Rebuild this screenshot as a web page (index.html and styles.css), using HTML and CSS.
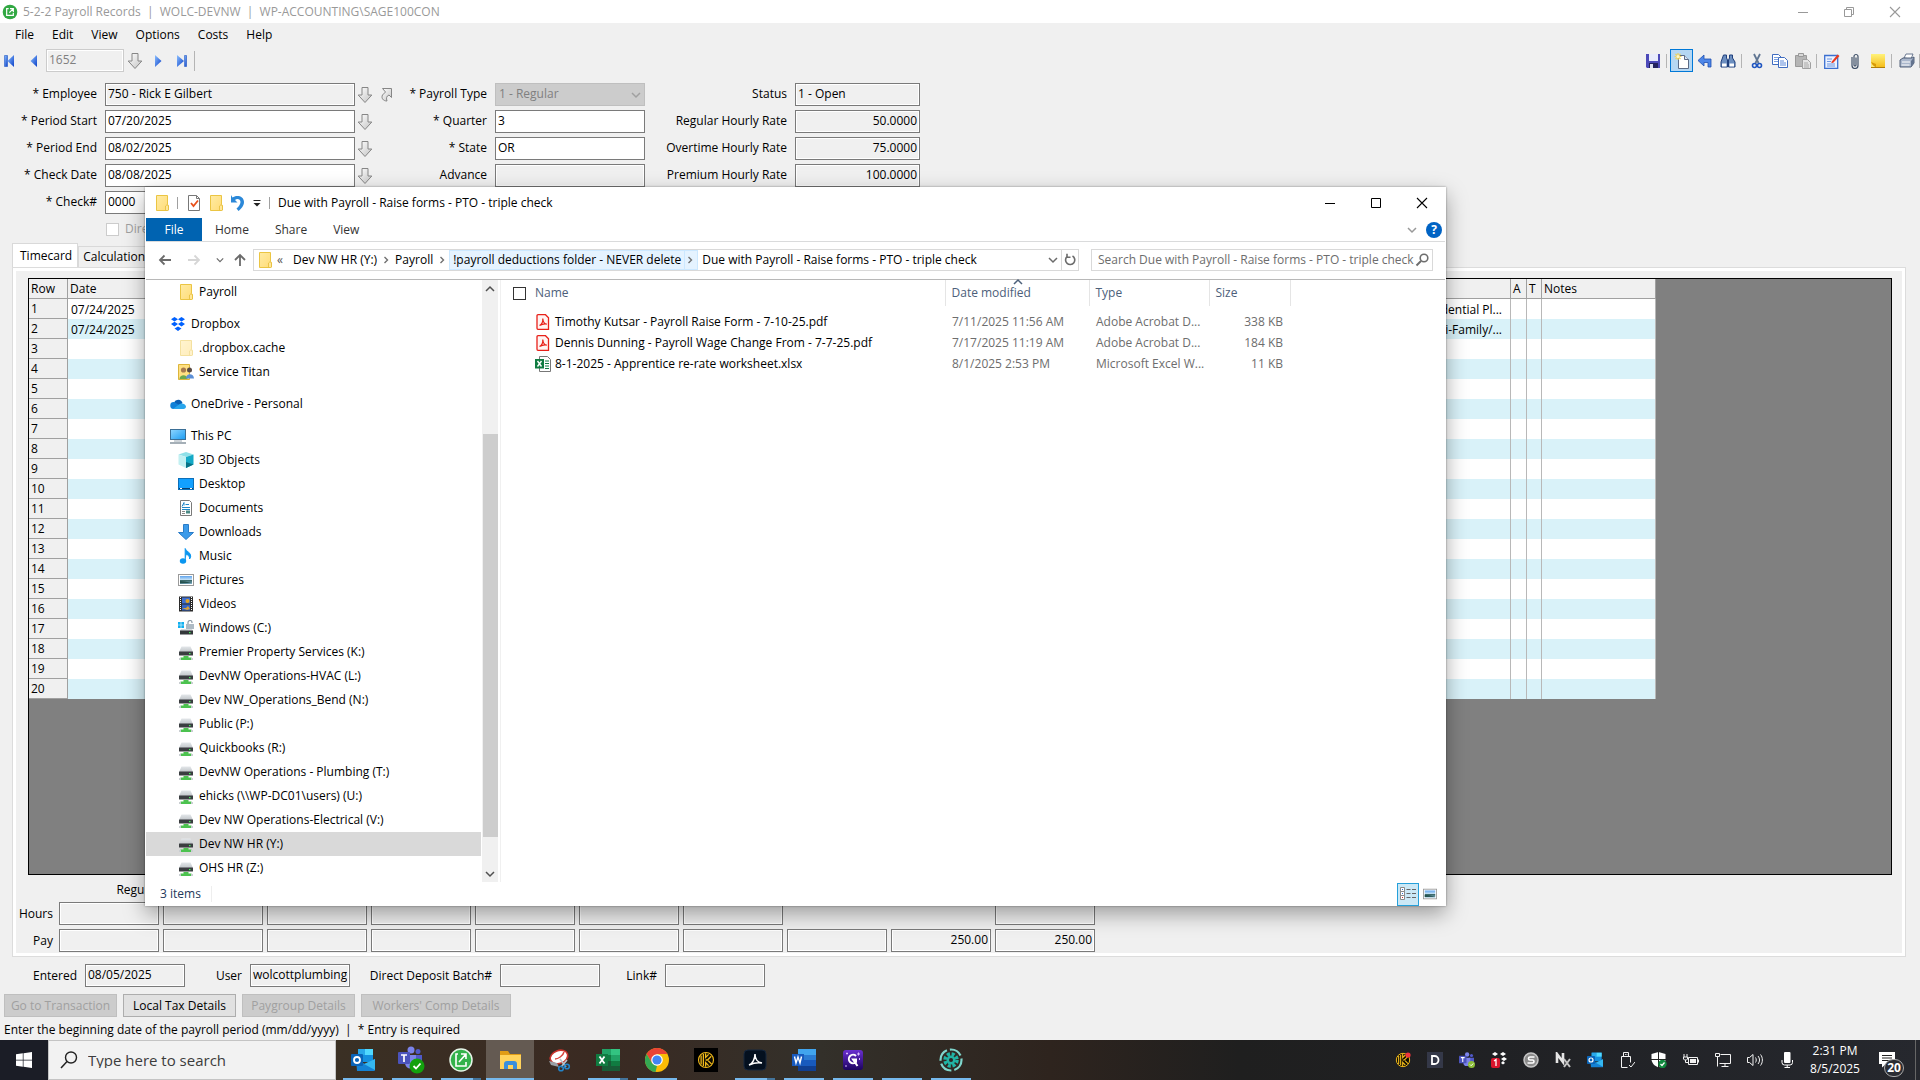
FILE: index.html
```html
<!DOCTYPE html>
<html lang="en">
<head>
  <meta charset="UTF-8" />
  <meta name="viewport" content="width=device-width, initial-scale=1.0" />
  <title>5-2-2 Payroll Records</title>
  <link rel="stylesheet" href="styles.css">
</head>
<body>
  <!-- shared icons -->
  <svg class="sprite" aria-hidden="true">
    <defs>
      <linearGradient id="g-blue" x1="0" y1="0" x2="1" y2="1"><stop offset="0" stop-color="#8cc0ff"/><stop offset="1" stop-color="#0a3fc8"/></linearGradient>
      <linearGradient id="g-grey" x1="0" y1="0" x2="1" y2="1"><stop offset="0" stop-color="#ffffff"/><stop offset="1" stop-color="#c4c4c4"/></linearGradient>
      <linearGradient id="g-folder" x1="0" y1="0" x2="1" y2="1"><stop offset="0" stop-color="#ffeba3"/><stop offset="1" stop-color="#ffdc78"/></linearGradient>
      <linearGradient id="g-screen" x1="0" y1="0" x2="1" y2="1"><stop offset="0" stop-color="#8fd6ff"/><stop offset="1" stop-color="#1b9cf2"/></linearGradient>
      <linearGradient id="g-drive" x1="0" y1="0" x2="0" y2="1"><stop offset="0" stop-color="#e4e7ea"/><stop offset="1" stop-color="#bfc4c8"/></linearGradient>
      <linearGradient id="g-photo" x1="0" y1="0" x2="0" y2="1"><stop offset="0" stop-color="#5ea3ee"/><stop offset=".55" stop-color="#d7ecf7"/><stop offset=".56" stop-color="#3c6a6b"/><stop offset="1" stop-color="#86b4cf"/></linearGradient>
      <linearGradient id="g-note" x1="0" y1="0" x2="0" y2="1"><stop offset="0" stop-color="#fff27a"/><stop offset="1" stop-color="#f5b914"/></linearGradient>
      <linearGradient id="g-purple" x1="0" y1="0" x2="0" y2="1"><stop offset="0" stop-color="#6a2fd0"/><stop offset="1" stop-color="#1c0360"/></linearGradient>
    </defs>
    <symbol id="down" viewBox="0 0 16 18"><path d="M5 1.500h6v7.500h3.800L8 16.500 1.200 9H5z" fill="url(#g-grey)" stroke="#868686"/></symbol>
    <symbol id="jump" viewBox="0 0 14 16"><path d="M3.500 1.500h9v9l-2.500-2.500c-2.500 1-3 3-2 6-4 0-6-3-4.500-6L6.500 5z" fill="url(#g-grey)" stroke="#868686"/></symbol>
    <symbol id="folder" viewBox="0 0 16 16"><path d="M2.500.5h11v9l1 .8v4.700l-1 .5h-11z" fill="url(#g-folder)" stroke="#ebc543"/><path d="M11.500 15.500v-4.500l1.500-1.300 1.500 1.300v4l-1 .5z" fill="#ffe79a" stroke="#e6bd39" stroke-width=".8"/></symbol>
    <symbol id="drive" viewBox="0 0 16 16"><path d="M3.500 2.500h9L15 8H1z" fill="url(#g-drive)"/><rect x="1" y="7.500" width="14" height="4" rx=".5" fill="#3a3d40"/><rect x="11" y="9" width="1.500" height="1.200" fill="#43f05a"/><path d="M5.500 12h5v1.500h3V16h-11v-2.500h3z" fill="#4cc24f"/><path d="M1 14h2v2H1zm12 0h2v2h-2z" fill="#c9ced2"/></symbol>
    <symbol id="photo" viewBox="0 0 16 16"><rect x=".5" y="2.500" width="15" height="11" fill="#fff" stroke="#9a9a9a"/><rect x="2" y="4" width="12" height="8" fill="url(#g-photo)"/><path d="M2 9l5 .5 7 1.500-12 .5z" fill="#24524e"/></symbol>
    <symbol id="chevron" viewBox="0 0 10 10"><path d="M3.500 2l3 3-3 3" fill="none" stroke="#707070" stroke-width="1.400"/></symbol>
    <symbol id="caret" viewBox="0 0 10 10"><path d="M1 3l4 4 4-4" fill="none" stroke="currentColor" stroke-width="1.500"/></symbol>
    <symbol id="glass" viewBox="0 0 14 14"><circle cx="9" cy="5" r="3.800" fill="none" stroke="currentColor" stroke-width="1.600"/><path d="M6 8l-4.500 4.500" stroke="currentColor" stroke-width="2"/></symbol>
    <symbol id="pdf" viewBox="0 0 16 16"><path d="M3 .7h7.500l3 3v11.600H3a1 1 0 0 1-1-1V1.700a1 1 0 0 1 1-1z" fill="#fff4f3" stroke="#e8211a" stroke-width="1.300"/><path d="M4.500 11.500c2-1 3.500-4 3.300-7 .3 3.500 2 5.500 4 5.600-2.500-.6-5 .2-7.300 1.400z" fill="none" stroke="#e8211a" stroke-width="1.200"/></symbol>
    <symbol id="close" viewBox="0 0 12 12"><path d="M1 1l10 10M11 1L1 11" stroke="currentColor" stroke-width="1.100"/></symbol>
    <symbol id="minimize" viewBox="0 0 12 12"><path d="M1 6.500h10" stroke="currentColor"/></symbol>
    <symbol id="outlook" viewBox="0 0 24 24"><path d="M7 1h15v13H7z" fill="#1490df"/><path d="M14 1h8v6h-8z" fill="#50d9ff"/><path d="M7 1h7v6H7z" fill="#28a8ea"/><path d="M5 11l9 5 10-5v11a1 1 0 0 1-1 1H6z" fill="#1482d4"/><path d="M24 11v11L13 16z" fill="#35b8f1"/><rect y="6" width="12" height="12" rx="1" fill="#0a64b8"/><circle cx="6" cy="12" r="3" fill="none" stroke="#fff" stroke-width="1.800"/></symbol>
    <symbol id="teams" viewBox="0 0 24 24"><circle cx="13" cy="4" r="3.500" fill="#7b83eb"/><circle cx="20" cy="5.500" r="2.500" fill="#5059c9"/><path d="M16 9h8v7a4 4 0 0 1-6 3z" fill="#5059c9"/><path d="M7 9h11v8a5.500 5.500 0 0 1-11 0z" fill="#7b83eb"/><rect y="6" width="12" height="12" rx="1" fill="#4b53bc"/><path d="M3 9h6M6 9v7" stroke="#fff" stroke-width="1.700"/></symbol>
    <symbol id="sage" viewBox="0 0 24 24"><circle cx="12" cy="12" r="11" fill="#32a843"/><path d="M10 7H7v10h10v-4M12 7h5v5M17 7l-6 6" fill="none" stroke="#fff" stroke-width="1.800"/></symbol>
    <symbol id="keeper" viewBox="0 0 24 24"><circle cx="12" cy="12" r="10" fill="#0c0a02" stroke="#f0b91a" stroke-width="1.500"/><path d="M5.500 6v12M8.500 4v16M11.500 3v5.500l4-4M11.500 21v-5.500l4 4M11.500 12h2.500l5-5M15 13l4.500 4.500" fill="none" stroke="#f0b91a" stroke-width="1.700"/></symbol>
  </svg>

  <main class="app">
    <header class="titlebar">
      <svg class="app-icon"><use href="#sage"/></svg>
      <h1 class="app-title">5-2-2 Payroll Records&nbsp; |&nbsp; WOLC-DEVNW&nbsp; |&nbsp; WP-ACCOUNTING\SAGE100CON</h1>
      <div class="win-controls">
        <button aria-label="Minimize"><svg class="i12"><use href="#minimize"/></svg></button>
        <button aria-label="Restore"><svg class="i12" viewBox="0 0 12 12"><path d="M1.500 3.500h7v7h-7zM3.500 3.500v-2h7v7h-2" fill="none" stroke="currentColor"/></svg></button>
        <button aria-label="Close"><svg class="i12"><use href="#close"/></svg></button>
      </div>
    </header>

    <nav class="menubar">
      <button>File</button>
      <button>Edit</button>
      <button>View</button>
      <button>Options</button>
      <button>Costs</button>
      <button>Help</button>
    </nav>

    <div class="toolbar">
      <div class="record-nav">
        <button aria-label="First record"><svg class="i14" viewBox="0 0 14 14"><path d="M1.500 1.500h3v11h-3z" fill="url(#g-blue)" stroke="#2457c4" stroke-width=".6"/><path d="M11 1v12L4.500 7z" fill="url(#g-blue)"/></svg></button>
        <button aria-label="Previous record"><svg class="i14" viewBox="0 0 14 14"><path d="M10 1v12L3.500 7z" fill="url(#g-blue)"/></svg></button>
        <input class="record-no" type="text" value="1652" aria-label="Record number" disabled>
        <button class="pick" aria-label="Pick record"><svg class="arrow"><use href="#down"/></svg></button>
        <button aria-label="Next record"><svg class="i14" viewBox="0 0 14 14"><path d="M4 1v12l6.500-6z" fill="url(#g-blue)"/></svg></button>
        <button aria-label="Last record"><svg class="i14" viewBox="0 0 14 14"><path d="M9.500 1.500h2v11h-2z" fill="url(#g-blue)" stroke="#2457c4" stroke-width=".6"/><path d="M2 1v12l7-6z" fill="url(#g-blue)"/></svg></button>
        <span class="sep"></span>
      </div>
      <div class="tools">
        <button aria-label="Save"><svg class="i16" viewBox="0 0 16 16"><path d="M1 1h14v14H2l-1-1z" fill="#4c49b8"/><path d="M4 1h9v7H4z" fill="#e9ecfb"/><path d="M4 10h9v5H4z" fill="#23225e"/><path d="M5 11h3v4H5z" fill="#dfe1f2"/></svg></button>
        <span class="sep"></span>
        <button class="on" aria-label="New"><svg class="i16" viewBox="0 0 16 16"><path d="M4.500 2.500h6l4 4v9h-10z" fill="#fff" stroke="#5b6b86"/><path d="M10.500 2.500v4h4" fill="#dbe5f5" stroke="#5b6b86"/><path d="M4 0v7M.5 3.500h7M1.500 1l5 5M6.500 1l-5 5" stroke="#efd25b" stroke-width="1.200"/><circle cx="4" cy="3.500" r="1.500" fill="#fff8c8"/></svg></button>
        <button aria-label="Undo"><svg class="i16" viewBox="0 0 16 16"><path d="M7 2v4h7v8h-3V9.500H7v3.500L1 7.500z" fill="#4d86e8" stroke="#1f4fae" stroke-width=".8"/></svg></button>
        <button aria-label="Find"><svg class="i16" viewBox="0 0 16 16"><path d="M3.500 2h3v3l1 2v7h-6.500V9zM9.500 2h3v3L15 9v5H8.500V7l1-2z" fill="#6d8fc0" stroke="#1f3f7c"/><path d="M2 10.500h4.500v3H2zM9.500 10.500H14v3H9.500z" fill="#fff"/><path d="M7 7h2v3H7z" fill="#1f3f7c"/></svg></button>
        <span class="sep"></span>
        <button aria-label="Cut"><svg class="i16" viewBox="0 0 16 16"><path d="M5 1l4.500 9M11 1L6.500 10" stroke="#5f7592" stroke-width="1.800"/><circle cx="5.500" cy="12.500" r="2" fill="none" stroke="#1f55c0" stroke-width="1.600"/><circle cx="10.500" cy="12.500" r="2" fill="none" stroke="#1f55c0" stroke-width="1.600"/></svg></button>
        <button aria-label="Copy"><svg class="i16" viewBox="0 0 16 16"><path d="M.5 1.500h6l2.500 2.500v7.500H.5z" fill="#fff" stroke="#3f6cc0"/><path d="M2 4.500h4M2 6.500h5M2 8.500h5" stroke="#7ba0e0"/><path d="M6.500 4.500h6l3 3v7h-9z" fill="#fff" stroke="#3f6cc0"/><path d="M8 8h4M8 10h6M8 12h6" stroke="#5c88d8"/></svg></button>
        <button aria-label="Paste" disabled><svg class="i16" viewBox="0 0 16 16"><path d="M.5 2.500h11v11H.5z" fill="#b5b5b5" stroke="#9a9a9a"/><path d="M3.500.5h5v3h-5z" fill="#d8d8d8" stroke="#999"/><path d="M7.500 6.500h5l3 3v6h-8z" fill="#e4e4e4" stroke="#a0a0a0"/><path d="M9 10h4M9 12h5M9 14h5" stroke="#aaa"/></svg></button>
        <span class="sep"></span>
        <button aria-label="Edit"><svg class="i16" viewBox="0 0 16 16"><path d="M.700 2.500h13v13H.700z" fill="#eaf1ff" stroke="#3b6fd0" stroke-width="1.300"/><path d="M3 6h5M3 8.500h4M3 11h8M3 13h8" stroke="#6f96df"/><path d="M7 9.500L13.500 1.500l2 1.500L9 10z" fill="#e8391f"/></svg></button>
        <button aria-label="Attachments"><svg class="i16" viewBox="0 0 16 16"><path d="M5 4v8.500a3 3 0 0 0 6 0V3.500a2 2 0 0 0-4 0V12a1 1 0 0 0 2 0V4.500" fill="none" stroke="#3f5068" stroke-width="1.200"/></svg></button>
        <button aria-label="Notes"><svg class="i16" viewBox="0 0 16 16"><path d="M1 1h14v14H1z" fill="url(#g-note)"/><path d="M1 9l5 2v4H1z" fill="#d89a05"/><path d="M1 15V9c1 3 3 4.500 6 6z" fill="#fde878"/><path d="M1 14.500h14" stroke="#b07d08"/></svg></button>
        <span class="sep"></span>
        <button aria-label="Print"><svg class="i16" viewBox="0 0 16 16"><path d="M5 5l2-4h7l-2 5z" fill="#fff" stroke="#5c6c86" stroke-width=".9"/><path d="M1 7l3-2h9l2-1v6l-3 4H1z" fill="#a9b6cb" stroke="#44546e" stroke-width=".9"/><path d="M2.500 12h8M3 9h8" stroke="#fff"/><path d="M12 8l3-3.500V10l-3 4z" fill="#63738e"/></svg></button>
        <span class="sep"></span>
      </div>
    </div>

    <form class="record-form">
      <div class="form-col wide">
        <label for="employee">* Employee</label>
        <input id="employee" type="text" value="750 - Rick E Gilbert" readonly>
        <div class="lookups"><svg class="arrow"><use href="#down"/></svg><svg class="jump"><use href="#jump"/></svg></div>
        <label for="period-start">* Period Start</label>
        <input id="period-start" type="text" value="07/20/2025">
        <div class="lookups"><svg class="arrow"><use href="#down"/></svg></div>
        <label for="period-end">* Period End</label>
        <input id="period-end" type="text" value="08/02/2025">
        <div class="lookups"><svg class="arrow"><use href="#down"/></svg></div>
        <label for="check-date">* Check Date</label>
        <input id="check-date" type="text" value="08/08/2025">
        <div class="lookups"><svg class="arrow"><use href="#down"/></svg></div>
        <label for="check-no">* Check#</label>
        <input id="check-no" type="text" value="0000">
        <span></span>
        <span></span>
        <div class="check-row"><input id="direct" type="checkbox" disabled><label for="direct">Direct Deposit</label></div>
      </div>
      <div class="form-col mid">
        <label for="pay-type">* Payroll Type</label>
        <div class="select-box">
          <select id="pay-type" disabled><option>1 - Regular</option></select>
          <svg class="i10"><use href="#caret"/></svg>
        </div>
        <label for="quarter">* Quarter</label>
        <input id="quarter" type="text" value="3">
        <label for="state">* State</label>
        <input id="state" type="text" value="OR">
        <label for="advance">Advance</label>
        <input id="advance" type="text" readonly>
      </div>
      <div class="form-col rates">
        <label for="status">Status</label>
        <input id="status" type="text" value="1 - Open" readonly>
        <label for="rate-reg">Regular Hourly Rate</label>
        <input id="rate-reg" class="num" type="text" value="50.0000" readonly>
        <label for="rate-ot">Overtime Hourly Rate</label>
        <input id="rate-ot" class="num" type="text" value="75.0000" readonly>
        <label for="rate-prem">Premium Hourly Rate</label>
        <input id="rate-prem" class="num" type="text" value="100.0000" readonly>
      </div>
    </form>

    <div class="tabs">
      <button class="tab active">Timecard</button>
      <button class="tab">Calculations</button>
    </div>

    <section class="panel">
      <div class="grid-area">
        <table class="timecard">
          <colgroup><col class="c-row"><col class="c-date"><col class="c-mid"><col class="c-cost"><col class="c-a"><col class="c-t"><col class="c-notes"></colgroup>
          <thead>
            <tr><th>Row</th><th>Date</th><th></th><th></th><th>A</th><th>T</th><th>Notes</th></tr>
          </thead>
          <tbody>
            <tr><th>1</th><td>07/24/2025</td><td></td><td class="cost">Residential Pl...</td><td></td><td></td><td></td></tr>
            <tr><th>2</th><td>07/24/2025</td><td></td><td class="cost">Multi-Family/...</td><td></td><td></td><td></td></tr>
            <tr><th>3</th><td></td><td></td><td></td><td></td><td></td><td></td></tr>
            <tr><th>4</th><td></td><td></td><td></td><td></td><td></td><td></td></tr>
            <tr><th>5</th><td></td><td></td><td></td><td></td><td></td><td></td></tr>
            <tr><th>6</th><td></td><td></td><td></td><td></td><td></td><td></td></tr>
            <tr><th>7</th><td></td><td></td><td></td><td></td><td></td><td></td></tr>
            <tr><th>8</th><td></td><td></td><td></td><td></td><td></td><td></td></tr>
            <tr><th>9</th><td></td><td></td><td></td><td></td><td></td><td></td></tr>
            <tr><th>10</th><td></td><td></td><td></td><td></td><td></td><td></td></tr>
            <tr><th>11</th><td></td><td></td><td></td><td></td><td></td><td></td></tr>
            <tr><th>12</th><td></td><td></td><td></td><td></td><td></td><td></td></tr>
            <tr><th>13</th><td></td><td></td><td></td><td></td><td></td><td></td></tr>
            <tr><th>14</th><td></td><td></td><td></td><td></td><td></td><td></td></tr>
            <tr><th>15</th><td></td><td></td><td></td><td></td><td></td><td></td></tr>
            <tr><th>16</th><td></td><td></td><td></td><td></td><td></td><td></td></tr>
            <tr><th>17</th><td></td><td></td><td></td><td></td><td></td><td></td></tr>
            <tr><th>18</th><td></td><td></td><td></td><td></td><td></td><td></td></tr>
            <tr><th>19</th><td></td><td></td><td></td><td></td><td></td><td></td></tr>
            <tr><th>20</th><td></td><td></td><td></td><td></td><td></td><td></td></tr>
          </tbody>
        </table>
      </div>

      <div class="totals">
        <span></span><span>Regular</span><span></span><span></span><span></span><span></span><span></span><span></span><span></span><span></span><span></span>
        <label for="hours-1">Hours</label>
        <input id="hours-1" type="text" readonly>
        <input type="text" aria-label="Hours 2" readonly>
        <input type="text" aria-label="Hours 3" readonly>
        <input type="text" aria-label="Hours 4" readonly>
        <input type="text" aria-label="Hours 5" readonly>
        <input type="text" aria-label="Hours 6" readonly>
        <input type="text" aria-label="Hours 7" readonly>
        <span></span>
        <span></span>
        <input type="text" aria-label="Hours total" readonly>
        <label for="pay-1">Pay</label>
        <input id="pay-1" type="text" readonly>
        <input type="text" aria-label="Pay 2" readonly>
        <input type="text" aria-label="Pay 3" readonly>
        <input type="text" aria-label="Pay 4" readonly>
        <input type="text" aria-label="Pay 5" readonly>
        <input type="text" aria-label="Pay 6" readonly>
        <input type="text" aria-label="Pay 7" readonly>
        <input type="text" aria-label="Pay 8" readonly>
        <input class="num" type="text" aria-label="Pay 9" value="250.00" readonly>
        <input class="num" type="text" aria-label="Pay total" value="250.00" readonly>
      </div>
    </section>

    <div class="entry-info">
      <label for="entered">Entered</label><input id="entered" type="text" value="08/05/2025" readonly>
      <label for="user">User</label><input id="user" type="text" value="wolcottplumbing\ehicks" readonly>
      <label for="batch" class="batch">Direct Deposit Batch#</label><input id="batch" type="text" readonly>
      <label for="link">Link#</label><input id="link" type="text" readonly>
    </div>

    <div class="actions">
      <button disabled>Go to Transaction</button>
      <button>Local Tax Details</button>
      <button disabled>Paygroup Details</button>
      <button class="long" disabled>Workers' Comp Details</button>
    </div>
    <p class="hint">Enter the beginning date of the payroll period (mm/dd/yyyy)&nbsp; |&nbsp; * Entry is required</p>
  </main>

  <section class="explorer">
    <header class="ex-title">
      <svg class="i16"><use href="#folder"/></svg>
      <span class="bar"></span>
      <svg class="i16" viewBox="0 0 16 16"><path d="M2.500.5h8l3 3v12h-11z" fill="#fff" stroke="#777"/><path d="M10.500.5v3h3" fill="none" stroke="#777"/><path d="M5 8l2.500 3L12 5.500" fill="none" stroke="#e8501a" stroke-width="1.800"/></svg>
      <svg class="i16"><use href="#folder"/></svg>
      <svg class="i16" viewBox="0 0 16 16"><path d="M1 0l1.500 2.500C6-.5 14 .5 14 7c0 4-3 7-5.500 9L6.500 13.500C9 11.500 10.500 9 10.500 7c0-3-3.500-4-5.500-2l2.500 2.500H1z" fill="#2b88d8"/></svg>
      <svg class="i10" viewBox="0 0 10 10"><path d="M1.500 2.500h7" stroke="#222"/><path d="M1.500 5h7L5 8.500z" fill="#222"/></svg>
      <span class="bar"></span>
      <h2>Due with Payroll - Raise forms - PTO - triple check</h2>
      <div class="win-controls">
        <button aria-label="Minimize"><svg class="i12"><use href="#minimize"/></svg></button>
        <button aria-label="Maximize"><svg class="i12" viewBox="0 0 12 12"><path d="M1.500 1.500h9v9h-9z" fill="none" stroke="currentColor"/></svg></button>
        <button aria-label="Close"><svg class="i12"><use href="#close"/></svg></button>
      </div>
    </header>

    <nav class="ribbon">
      <button class="file">File</button>
      <button>Home</button>
      <button>Share</button>
      <button>View</button>
      <svg class="i10 expand"><use href="#caret"/></svg>
      <button class="help" aria-label="Help">?</button>
    </nav>

    <div class="address-row">
      <button aria-label="Back"><svg class="i14" viewBox="0 0 14 14"><path d="M13 7H2M6.500 2.500L2 7l4.500 4.500" fill="none" stroke="#6b6b6b" stroke-width="1.800"/></svg></button>
      <button class="forward" aria-label="Forward"><svg class="i14" viewBox="0 0 14 14"><path d="M1 7h11M7.500 2.500L12 7l-4.500 4.500" fill="none" stroke="#d6d6d6" stroke-width="1.800"/></svg></button>
      <button class="recent" aria-label="Recent locations"><svg class="i8"><use href="#caret"/></svg></button>
      <button class="up" aria-label="Up"><svg class="i14" viewBox="0 0 14 14"><path d="M7 13V2M2 7l5-5 5 5" fill="none" stroke="#6b6b6b" stroke-width="1.800"/></svg></button>
      <div class="address">
        <svg class="i16"><use href="#folder"/></svg>
        <span class="dots">«</span>
        <button>Dev NW HR (Y:)</button>
        <svg class="i10"><use href="#chevron"/></svg>
        <button>Payroll</button>
        <svg class="i10"><use href="#chevron"/></svg>
        <span class="crumb-hot"><button>!payroll deductions folder - NEVER delete</button><svg class="i10"><use href="#chevron"/></svg></span>
        <button>Due with Payroll - Raise forms - PTO - triple check</button>
        <svg class="i10 open"><use href="#caret"/></svg>
        <button class="refresh" aria-label="Refresh"><svg class="i14" viewBox="0 0 14 14"><path d="M9.500 3A4.600 4.600 0 1 1 4 3.600M4 .8v3.400h3.500" fill="none" stroke="#6b6b6b" stroke-width="1.600"/></svg></button>
      </div>
      <div class="search">
        <input type="text" aria-label="Search" placeholder="Search Due with Payroll - Raise forms - PTO - triple check">
        <svg class="i14"><use href="#glass"/></svg>
      </div>
    </div>

    <div class="ex-body">
      <ul class="tree">
        <li><a href="#"><svg class="i16"><use href="#folder"/></svg>Payroll</a></li>
        <li class="root"><a href="#"><svg class="i16" viewBox="0 0 16 16"><path d="M4.500 1L8 3.300 4.500 5.600 1 3.300zM11.500 1L15 3.300l-3.500 2.300L8 3.300zM4.500 5.800L8 8.100l-3.500 2.300L1 8.100zM11.500 5.800L15 8.100l-3.500 2.300L8 8.100zM8 10.400l3.500 2.200L8 15l-3.500-2.400z" fill="#0061fe"/></svg>Dropbox</a></li>
        <li><a href="#"><svg class="i16 faded"><use href="#folder"/></svg>.dropbox.cache</a></li>
        <li><a href="#"><svg class="i16" viewBox="0 0 16 16"><path d="M.5.500h11v15H.5z" fill="#ffe082" stroke="#dcb53b"/><circle cx="5.500" cy="6" r="2.600" fill="#a77a4d"/><path d="M1.500 15c0-5 8-5 8 0z" fill="#6aa84f"/><circle cx="11.500" cy="6" r="2.500" fill="#5a4a42"/><path d="M8 14.500c0-6 8-5.500 8 0z" fill="#5c8fd6"/></svg>Service Titan</a></li>
        <li class="root"><a href="#"><svg class="i16" viewBox="0 0 16 16"><path d="M4 6.500a4.500 4.500 0 0 1 8.500.5L8 11z" fill="#0a5fb4"/><path d="M3.500 13A3.500 3.500 0 0 1 4 6l7 4z" fill="#1080d8"/><path d="M3 13l6-4.500c2-2 6.500-1 7 2 0 1.500-1 2.500-2.500 2.500z" fill="#29a5ec"/></svg>OneDrive - Personal</a></li>
        <li class="root"><a href="#"><svg class="i16" viewBox="0 0 16 16"><rect x=".5" y="1.500" width="15" height="10" fill="url(#g-screen)" stroke="#3b6f96"/><path d="M4 13h8" stroke="#9aa7b2"/><path d="M0 15h16" stroke="#7f8d99" stroke-width="1.400"/></svg>This PC</a></li>
        <li><a href="#"><svg class="i16" viewBox="0 0 16 16"><path d="M8 0l7.500 2.500L8 5 .5 2.500z" fill="#8fe0e8"/><path d="M.5 2.500L8 5v11L.5 12.500z" fill="#c2f0f2"/><path d="M8 5l7.500-2.500v10L8 16z" fill="#14a9c6"/><path d="M8 10l7.500 2.500L8 16z" fill="#087286"/></svg>3D Objects</a></li>
        <li><a href="#"><svg class="i16" viewBox="0 0 16 16"><rect x=".5" y="2.500" width="15" height="11" fill="#12a0ff" stroke="#0d6fb8"/><path d="M1 12.500h14" stroke="#0b3f6c"/><path d="M2 12.500h2M12 12.500h2" stroke="#fff"/></svg>Desktop</a></li>
        <li><a href="#"><svg class="i16" viewBox="0 0 16 16"><path d="M2.500.5h9l2 2v13h-11z" fill="#fff" stroke="#7a7a7a"/><path d="M4 6.500l2-4v3M7.500 4.500H11M4 7.500h8M4 9.500h8" fill="none" stroke="#1f86c8"/><path d="M4 11.500h3M4 13.500h3" stroke="#888"/><path d="M8 10.500h4v3H8z" fill="#4a8a86"/></svg>Documents</a></li>
        <li><a href="#"><svg class="i16" viewBox="0 0 16 16"><path d="M5.500.5h5v8h5L8 15.500.5 8.500h5z" fill="#3c9bea" stroke="#2a7cc8"/></svg>Downloads</a></li>
        <li><a href="#"><svg class="i16" viewBox="0 0 16 16"><ellipse cx="5" cy="13" rx="3.200" ry="2.700" fill="#0a96f0"/><path d="M7.200 13V.5c.5 3 5.500 3.500 5.500 7.500 0 1.500-.7 2.500-1.200 3 .5-3-1.500-4-3-4.500" fill="#0a96f0" stroke="#0a96f0"/></svg>Music</a></li>
        <li><a href="#"><svg class="i16"><use href="#photo"/></svg>Pictures</a></li>
        <li><a href="#"><svg class="i16" viewBox="0 0 16 16"><path d="M1 .5h14v15H1z" fill="#2b2b2b"/><path d="M4 1.500h8v6H4z" fill="#3f6fd0"/><path d="M4 8.500h8v6H4z" fill="#3564c4"/><circle cx="9.500" cy="5" r="2" fill="#e2a41f"/><path d="M4 12h4l2-2 2 3-3 1z" fill="#d8a23a"/><path d="M2.500 1v14M13.500 1v14" stroke="#fff" stroke-dasharray="1 1"/></svg>Videos</a></li>
        <li><a href="#"><svg class="i16" viewBox="0 0 16 16"><path d="M0 2h2.700v2.700H0zM3.300 2H6v2.700H3.300zM0 5.300h2.700V8H0zM3.300 5.300H6V8H3.300z" fill="#12b0f0"/><path d="M10 4V2.500a2 2 0 0 1 4 0V3" fill="none" stroke="#8c9aa6" stroke-width="1.200"/><rect x="8" y="4" width="8" height="5" fill="#aebac4"/><path d="M3 9h11l1 2H2z" fill="#d5d9dc"/><rect x="2" y="10.500" width="13" height="4" fill="#33373a"/><rect x="11" y="12" width="1.500" height="1.200" fill="#43f05a"/></svg>Windows (C:)</a></li>
        <li><a href="#"><svg class="i16"><use href="#drive"/></svg>Premier Property Services (K:)</a></li>
        <li><a href="#"><svg class="i16"><use href="#drive"/></svg>DevNW Operations-HVAC (L:)</a></li>
        <li><a href="#"><svg class="i16"><use href="#drive"/></svg>Dev NW_Operations_Bend (N:)</a></li>
        <li><a href="#"><svg class="i16"><use href="#drive"/></svg>Public (P:)</a></li>
        <li><a href="#"><svg class="i16"><use href="#drive"/></svg>Quickbooks (R:)</a></li>
        <li><a href="#"><svg class="i16"><use href="#drive"/></svg>DevNW Operations - Plumbing (T:)</a></li>
        <li><a href="#"><svg class="i16"><use href="#drive"/></svg>ehicks (\\WP-DC01\users) (U:)</a></li>
        <li><a href="#"><svg class="i16"><use href="#drive"/></svg>Dev NW Operations-Electrical (V:)</a></li>
        <li class="selected"><a href="#"><svg class="i16"><use href="#drive"/></svg>Dev NW HR (Y:)</a></li>
        <li><a href="#"><svg class="i16"><use href="#drive"/></svg>OHS HR (Z:)</a></li>
      </ul>
      <div class="scrollbar">
        <svg class="i10 flip"><use href="#caret"/></svg>
        <div class="track"><div class="thumb"></div></div>
        <svg class="i10"><use href="#caret"/></svg>
      </div>
      <div class="files">
        <table>
          <colgroup><col class="f-name"><col class="f-date"><col class="f-type"><col class="f-size"></colgroup>
          <thead>
            <tr>
              <th><div class="name-head"><input type="checkbox" aria-label="Select all">Name</div></th>
              <th class="sorted">Date modified<svg class="i10 flip"><use href="#caret"/></svg></th>
              <th>Type</th>
              <th>Size</th>
            </tr>
          </thead>
          <tbody>
            <tr><td><a href="#"><svg class="i16"><use href="#pdf"/></svg>Timothy Kutsar - Payroll Raise Form - 7-10-25.pdf</a></td><td>7/11/2025 11:56 AM</td><td>Adobe Acrobat D...</td><td>338 KB</td></tr>
            <tr><td><a href="#"><svg class="i16"><use href="#pdf"/></svg>Dennis Dunning - Payroll Wage Change From - 7-7-25.pdf</a></td><td>7/17/2025 11:19 AM</td><td>Adobe Acrobat D...</td><td>184 KB</td></tr>
            <tr><td><a href="#"><svg class="i16" viewBox="0 0 16 16"><path d="M4.500.5h8l3 3v12h-11z" fill="#fff" stroke="#777"/><path d="M10 5h4M10 7.500h4M10 10h4M10 12.500h4" stroke="#107c41"/><path d="M0 3h9v9.500H0z" fill="#107c41"/><path d="M2.500 5l4 5.500M6.500 5l-4 5.500" stroke="#fff" stroke-width="1.400"/></svg>8-1-2025 - Apprentice re-rate worksheet.xlsx</a></td><td>8/1/2025 2:53 PM</td><td>Microsoft Excel W...</td><td>11 KB</td></tr>
          </tbody>
        </table>
      </div>
    </div>

    <footer class="ex-status">
      <span class="count">3 items</span>
      <button class="view on" aria-label="Details view"><svg class="i16" viewBox="0 0 16 16"><path d="M.5 1.500h4v4h-4zM.5 5.500h4v4h-4zM.5 9.500h4v4h-4z" fill="#fff" stroke="#8a8a8a"/><path d="M2 3h1v1H2zM2 7h1v1H2z" fill="#2f6fd0"/><path d="M2 11h1v1H2z" fill="#d03030"/><path d="M6.500 3.500h4M12 3.500h4M6.500 7.500h4M12 7.500h4M6.500 11.500h4M12 11.500h4" stroke="#666"/></svg></button>
      <button class="view" aria-label="Large icons view"><svg class="i14"><use href="#photo"/></svg></button>
    </footer>
  </section>

  <footer class="taskbar">
    <button class="start" aria-label="Start"><svg class="i16" viewBox="0 0 16 16"><path d="M0 2.300L6.800 1.300v6.400H0zM7.500 1.200L16 0v7.700H7.500zM0 8.400h6.800v6.400L0 13.800zM7.500 8.400H16V16l-8.500-1.200z" fill="#fff"/></svg></button>
    <div class="task-search">
      <svg class="i20" viewBox="0 0 20 20"><circle cx="12" cy="7.500" r="5.500" fill="none" stroke="#222" stroke-width="1.400"/><path d="M8 11.500L2 18" stroke="#222" stroke-width="1.500"/></svg>
      <input type="text" placeholder="Type here to search" aria-label="Type here to search">
    </div>
    <div class="apps">
      <button class="open" aria-label="Outlook"><svg class="i24"><use href="#outlook"/></svg></button>
      <button class="open" aria-label="Teams"><svg class="i28" viewBox="0 0 28 28"><use href="#teams" width="24" height="24"/><circle cx="19" cy="20" r="7.500" fill="#13a10e"/><path d="M15.500 20l2.500 2.500 4.500-5" fill="none" stroke="#fff" stroke-width="1.800"/></svg></button>
      <button class="open stacked" aria-label="Sage 100 Contractor"><svg class="i24" viewBox="0 0 24 24"><circle cx="12" cy="12" r="11" fill="#32b24a" stroke="#e6f5e8" stroke-width="1.500"/><path d="M9 6H7v12h10v-4M12 6h5v5M17 6l-7 8" fill="none" stroke="#fff" stroke-width="1.600"/></svg></button>
      <button class="open active" aria-label="File Explorer"><svg class="i24" viewBox="0 0 24 24"><path d="M2 3h8l2 3h11v4H2z" fill="#e09c16"/><path d="M2 7h21v14H2z" fill="#ffd35c"/><path d="M6 21v-5a3 3 0 0 1 3-3h7a3 3 0 0 1 3 3v5h-4v-4h-5v4z" fill="#3a8fdc"/></svg></button>
      <button aria-label="Snipping Tool"><svg class="i24" viewBox="0 0 24 24"><ellipse cx="12" cy="9" rx="9" ry="6.500" transform="rotate(-20 12 9)" fill="#fff" stroke="#c9332c" stroke-width="1.600"/><path d="M8 11c3 0 8-3 9-7" stroke="#d9453e" stroke-width="1.500" fill="none"/><path d="M2 13l8 2 2 4-8-2z" fill="#9aa0a6"/><path d="M13 11l6 8M20 12l-6 7" stroke="#b9c2ca" stroke-width="1.600"/><circle cx="14" cy="20.500" r="2.300" fill="none" stroke="#2383c8" stroke-width="1.600"/><circle cx="20" cy="18.500" r="2.300" fill="none" stroke="#2383c8" stroke-width="1.600"/></svg></button>
      <button class="open stacked" aria-label="Excel"><svg class="i24" viewBox="0 0 24 24"><path d="M6 1h18v22H6z" fill="#185c37"/><path d="M6 1h9v6H6z" fill="#21a366"/><path d="M15 1h9v6h-9z" fill="#33c481"/><path d="M6 7h9v6H6z" fill="#107c41"/><path d="M15 7h9v6h-9z" fill="#21a366"/><path d="M15 13h9v5h-9z" fill="#107c41"/><path d="M0 6h12v12H0z" fill="#107c41"/><path d="M3.500 8.500l5 7M8.500 8.500l-5 7" stroke="#fff" stroke-width="1.800"/></svg></button>
      <button class="open" aria-label="Chrome"><svg class="i24" viewBox="0 0 24 24"><circle cx="12" cy="12" r="12" fill="#fbbc05"/><path d="M1.600 6A12 12 0 0 1 22.400 6H12L7 15z" fill="#ea4335"/><path d="M1.600 6L7 15l5 3-1.500 6A12 12 0 0 1 1.600 6z" fill="#34a853"/><circle cx="12" cy="12" r="5.800" fill="#fff"/><circle cx="12" cy="12" r="4.600" fill="#4285f4"/></svg></button>
      <button aria-label="Keeper"><svg class="i24" viewBox="0 0 24 24"><path d="M0 0h24v24H0z" fill="#000"/><use href="#keeper" x="3" y="3" width="18" height="18"/></svg></button>
      <button class="open stacked" aria-label="Acrobat"><svg class="i24" viewBox="0 0 24 24"><rect x="1" y="2" width="22" height="20" rx="4" fill="#04101f" stroke="#16263c"/><path d="M6 17c3.500-1 6-6.500 6-11 0 5 3 8.500 7 9-4.500-.8-9 .2-13 2z" fill="none" stroke="#fff" stroke-width="1.500"/></svg></button>
      <button class="open" aria-label="Word"><svg class="i24" viewBox="0 0 24 24"><path d="M6 1h18v22H6z" fill="#103f91"/><path d="M6 1h18v6H6z" fill="#41a5ee"/><path d="M6 7h18v5H6z" fill="#2b7cd3"/><path d="M6 12h18v6H6z" fill="#185abd"/><path d="M0 6h12v12H0z" fill="#185abd"/><path d="M2.500 8.500L4 15l2-6 2 6 1.500-6.500" fill="none" stroke="#fff" stroke-width="1.400"/></svg></button>
      <button class="open" aria-label="GoTo"><svg class="i20" viewBox="0 0 20 20"><rect width="20" height="20" rx="3" fill="url(#g-purple)"/><path d="M13 6a4.200 4.200 0 1 0 0 6V9.500h-3l4.500 6.500" fill="none" stroke="#fff" stroke-width="2"/><path d="M15.500 2.500v3M14 4h3M4 2.500v2M3 3.500h2M16.500 8v2M3 15v2" stroke="#d8b8ff"/></svg></button>
      <button class="open" aria-label="Application"></button>
      <button class="open" aria-label="Settings tool"><svg class="i24" viewBox="0 0 24 24"><circle cx="12" cy="12" r="10.500" fill="none" stroke="#7fd6cc" stroke-width="2.200" stroke-dasharray="13 3"/><circle cx="12" cy="12" r="6" fill="none" stroke="#1fb5a5" stroke-width="3.500" stroke-dasharray="3 1.700"/><circle cx="12" cy="12" r="4.500" fill="#22b3a4"/><circle cx="12" cy="12" r="2" fill="#2a2522"/></svg></button>
    </div>
    <div class="tray">
      <svg class="i16" viewBox="0 0 16 16"><use href="#keeper" width="16" height="16"/><circle cx="13" cy="3" r="2.600" fill="#f0353c"/></svg>
      <svg class="i16" viewBox="0 0 16 16"><path d="M0 0h16v16H0z" fill="#343848"/><path d="M5 4h2.500a4 4 0 0 1 0 8H5z" fill="none" stroke="#fff" stroke-width="1.800"/></svg>
      <svg class="i16" viewBox="0 0 16 16"><use href="#teams" width="15" height="15"/><circle cx="12.500" cy="12.500" r="3.500" fill="#8cbd38"/><path d="M11 12.500l1.200 1.200 2-2.200" fill="none" stroke="#fff"/></svg>
      <svg class="i16" viewBox="0 0 16 16"><path d="M4 0l3 2-3 2-3-2zM12 0l3 2-3 2-3-2zM13 5l3 2-3 2-3-2zM12 9l2 2-2 1.500-2-1.500z" fill="#fff"/><rect y="6" width="9" height="10" rx="2" fill="#d8152c"/><path d="M3 9l2-1.500V14" fill="none" stroke="#fff" stroke-width="1.300"/></svg>
      <svg class="i16" viewBox="0 0 16 16"><circle cx="8" cy="8" r="7" fill="#8b8b8b" stroke="#c6c6c6" stroke-width="1.500"/><path d="M11.500 5H7a1.500 1.500 0 0 0 0 3h2.500a1.500 1.500 0 0 1 0 3h-5" fill="none" stroke="#fff" stroke-width="1.600"/></svg>
      <svg class="i16" viewBox="0 0 16 16"><path d="M2 11V2l6 8V1" fill="none" stroke="#e4e4e4" stroke-width="2.600"/><path d="M9 7l6 8M15 7l-6 8" stroke="#c4c4c4" stroke-width="2"/></svg>
      <svg class="i16"><use href="#outlook"/></svg>
      <svg class="i16" viewBox="0 0 16 16"><path d="M4.500 4.500v-4h5v4M2.500 4.500h9v6M2.500 4.500v11h6M6 2.500h.8M7.500 2.500h.8M10 13l2 2 4-5" fill="none" stroke="#f2f2f2"/></svg>
      <svg class="i16" viewBox="0 0 16 16"><path d="M7.500 0l7 2v5c0 4-3 7-7 8.500C3.500 14 .5 11 .5 7V2z" fill="#fff"/><path d="M7.500 0v16M0 7.500h15" stroke="#222"/><circle cx="11.500" cy="12" r="4.200" fill="#10893e"/><path d="M9.500 12l1.500 1.500 2.500-3" fill="none" stroke="#fff" stroke-width="1.200"/></svg>
      <svg class="i16" viewBox="0 0 16 16"><path d="M5.500 5.500h9v7h-9z" fill="none" stroke="#f2f2f2"/><path d="M7 7h6v4H7zM15 7.500h1v3h-1z" fill="#f2f2f2"/><path d="M1 2v3M4 2v3M.5 5h4v2l-1 1h-2l-1-1zM2.500 8v2.500h3" fill="none" stroke="#f2f2f2"/></svg>
      <svg class="i16" viewBox="0 0 16 16"><path d="M5.500 2.500h10v9h-11M10 11.500v3M6.500 14.500h7M.5 1.500h4v3h-4zM2.500 4.500v10" fill="none" stroke="#f2f2f2"/></svg>
      <svg class="i16" viewBox="0 0 16 16"><path d="M.5 5.500h2l3.500-3v11l-3.500-3h-2zM8.500 5.500c1 1.500 1 3.500 0 5M11 4c2 2.500 2 5.500 0 8M13.500 2.500c2.500 3 2.500 8 0 11" fill="none" stroke="#f2f2f2"/></svg>
      <svg class="i16" viewBox="0 0 16 16"><rect x="5" y="0" width="6.500" height="11" rx="1" fill="#fff"/><path d="M3 8v2.500a2.500 2.500 0 0 0 2.500 2.500h5.500a2.500 2.500 0 0 0 2.500-2.500V8M8.200 13v2M5.500 15.500H11" fill="none" stroke="#fff"/></svg>
    </div>
    <div class="clock"><time>2:31 PM</time><time>8/5/2025</time></div>
    <button class="notices" aria-label="Notifications">
      <svg class="i16" viewBox="0 0 16 16"><path d="M0 0h16v12h-9l-4 3.500V12H0z" fill="#fff"/><path d="M3 3.500h10M3 6h10M3 8.500h10" stroke="#222"/></svg>
      <span class="badge">20</span>
    </button>
  </footer>
</body>
</html>
```
FILE: styles.css
```css
* {
  box-sizing: border-box;
}

body {
  margin: 0;
  height: 100vh;
  display: flex;
  flex-direction: column;
  font-family: "Open Sans", "Noto Sans", sans-serif;
  font-size: 12px;
  line-height: 16px;
  color: #000;
  background: #f0f0f0;
  overflow: hidden;
}

button, input, select {
  font: inherit;
  color: inherit;
}

button {
  border: none;
  background: none;
  padding: 0;
}

h1, h2, p, ul {
  margin: 0;
  padding: 0;
  font-size: 12px;
  font-weight: normal;
}

a {
  color: inherit;
  text-decoration: none;
}

svg {
  display: block;
  flex: none;
}

.sprite {
  position: absolute;
  width: 0;
  height: 0;
}

.i8 { width: 8px; height: 8px; }
.i10 { width: 10px; height: 10px; }
.i12 { width: 12px; height: 12px; }
.i14 { width: 14px; height: 14px; }
.i16 { width: 16px; height: 16px; }
.i20 { width: 20px; height: 20px; }
.i24 { width: 24px; height: 24px; }
.i28 { width: 28px; height: 28px; }
.flip { transform: rotate(180deg); }
.arrow { width: 16px; height: 18px; }
.jump { width: 14px; height: 16px; }

/* payroll window */
.app {
  flex: 1;
  min-height: 0;
  display: flex;
  flex-direction: column;
}

.titlebar {
  display: flex;
  align-items: center;
  height: 23px;
  padding-left: 2px;
  background: #fff;
  color: #999;
}

.app-icon {
  width: 16px;
  height: 16px;
  margin-right: 5px;
}

.win-controls {
  display: flex;
  margin-left: auto;
}

.win-controls button {
  display: grid;
  place-items: center;
  width: 46px;
  height: 22px;
}

.titlebar .win-controls {
  padding-right: 2px;
}

.menubar {
  display: flex;
  gap: 18px;
  height: 24px;
  padding-left: 15px;
}

.toolbar {
  display: flex;
  justify-content: space-between;
  height: 27px;
  padding: 2px 0;
}

.record-nav, .tools {
  display: flex;
  align-items: center;
}

.record-nav {
  padding-left: 3px;
}

.record-nav button {
  padding: 0 5px;
}

.record-nav button:first-child {
  padding-left: 0;
}

.record-nav .pick {
  padding: 0 3px;
}

.record-no {
  width: 78px;
  margin: 0;
}

.record-form input[type="text"],
.record-no,
.totals input,
.entry-info input {
  height: 23px;
  min-width: 0;
  padding: 0 2px 2px;
  border: 1px solid #7a7a7a;
  background: #fff;
  box-shadow: inset 0 0 0 1px #fff;
}

.app input[readonly] {
  background: #f0f0f0;
}

.toolbar .record-no {
  border-color: #ccc;
  background: #f0f0f0;
  color: #808080;
}

.num {
  text-align: right;
}

.sep {
  width: 1px;
  height: 14px;
  background: #b4b4b4;
}

.record-nav .sep {
  height: 20px;
}

.tools button {
  display: grid;
  place-items: center;
  width: 23px;
  height: 23px;
}

.tools .sep {
  margin: 0 3px 0 2px;
}

.tools .sep:last-child {
  margin: 0 0 0 1px;
}

.tools .on {
  background: #b5d7f3;
  border: 1px solid #0078d7;
}

.form-col label {
  text-align: right;
}

.record-form {
  display: flex;
  padding: 9px 0 2px;
}

.form-col {
  display: grid;
  grid-auto-rows: 23px;
  gap: 4px 8px;
  align-items: center;
  align-content: start;
}

.wide { grid-template-columns: 97px 250px 32px; }
.mid { grid-template-columns: 92px 150px; }
.rates { grid-template-columns: 142px 125px; }

.form-col label {
  padding-bottom: 2px;
}

.lookups {
  display: flex;
  align-items: center;
  gap: 6px;
  margin-left: -6px;
}

.check-row {
  display: flex;
  align-items: center;
  gap: 6px;
  color: #a0a0a0;
}

.check-row input, .name-head input {
  appearance: none;
  width: 13px;
  height: 13px;
  margin: 0 0 0 1px;
  border: 1px solid #ccc;
  background: #fff;
}

.select-box {
  position: relative;
}

.select-box select {
  appearance: none;
  width: 100%;
  height: 23px;
  padding: 0 3px 2px;
  border: 1px solid #bfbfbf;
  border-radius: 0;
  background: #ccc;
  color: #808080;
  opacity: 1;
}

.select-box svg {
  position: absolute;
  right: 4px;
  top: 7px;
  color: #a0a0a0;
}

.tabs {
  display: flex;
  align-items: flex-end;
  padding-left: 12px;
}

.tab {
  height: 21px;
  padding: 0 4px;
  border: 1px solid #d9d9d9;
  border-bottom: none;
}

.tab.active {
  height: 24px;
  padding: 0 5px 0 7px;
  background: #fff;
}

.panel {
  flex: 1;
  min-height: 0;
  display: flex;
  flex-direction: column;
  margin: 0 14px 0 12px;
  padding: 10px 13px 4px 4px;
  border: 1px solid #dcdcdc;
  box-shadow: inset 0 0 0 3px #fff;
}

.grid-area {
  flex: 1;
  min-height: 0;
  margin-left: 11px;
  border: 1px solid #000;
  background: #808080;
  overflow: hidden;
}

.timecard {
  width: 1627px;
  table-layout: fixed;
  border-collapse: separate;
  border-spacing: 0;
  background: #fff;
}

.c-row { width: 39px; }
.c-date { width: 100px; }
.c-cost { width: 150px; }
.c-a { width: 16px; }
.c-t { width: 15px; }
.c-notes { width: 114px; }

.timecard th, .timecard td {
  height: 20px;
  padding: 0 2px;
  border-right: 1px solid #b8b8b8;
  font-weight: normal;
  text-align: left;
  line-height: 18px;
  white-space: nowrap;
}

.timecard th {
  background: #f0f0f0;
  border-right-color: #a0a0a0;
  border-bottom: 1px solid #a0a0a0;
}

.timecard td {
  padding: 1px 3px 0;
}

.timecard tbody tr:nth-child(even) {
  background: #d9f2f9;
}

.timecard .cost {
  padding-right: 8px;
  text-align: right;
}

.totals {
  display: grid;
  grid-template-columns: 38px repeat(10, 100px);
  grid-template-rows: 16px 23px 23px;
  column-gap: 4px;
  row-gap: 4px;
  align-items: center;
  margin-top: 7px;
  text-align: right;
}

.totals label {
  padding-right: 2px;
}

.entry-info {
  display: flex;
  align-items: center;
  gap: 8px;
  padding: 7px 0 0;
}

.entry-info label {
  width: 49px;
  text-align: right;
}

.entry-info label:first-child {
  width: 77px;
}

.entry-info .batch {
  width: 134px;
  white-space: nowrap;
}

.entry-info input {
  width: 100px;
}

.actions {
  display: flex;
  gap: 6px;
  padding: 7px 4px 0;
}

.actions button {
  width: 113px;
  height: 23px;
  border: 1px solid #adadad;
  background: #e1e1e1;
  white-space: nowrap;
}

.actions .long {
  width: 150px;
}

.actions button:disabled {
  border-color: #bfbfbf;
  background: #ccc;
  color: #a0a0a0;
}

.hint {
  padding: 5px 4px 2px;
}

/* file explorer floating over the payroll window */
.explorer {
  position: absolute;
  left: 145px;
  top: 187px;
  width: 1301px;
  height: 719px;
  display: flex;
  flex-direction: column;
  padding: 0 1px;
  background: #fff;
  box-shadow: 0 0 2px rgba(0,0,0,0.4), 0 8px 20px rgba(0,0,0,0.35);
}

.ex-title {
  display: flex;
  align-items: center;
  gap: 6px;
  height: 31px;
  padding-left: 8px;
}

.bar {
  width: 1px;
  height: 12px;
  margin: 0 2px 0 1px;
  background: #a0a0a0;
}

.ribbon {
  display: flex;
  align-items: center;
  height: 24px;
  border-bottom: 1px solid #dadbdc;
  color: #333;
}

.ribbon button {
  height: 23px;
  padding: 0 13px;
}

.ribbon .file {
  width: 56px;
  background: #0063b1;
  color: #fff;
}

.ribbon .expand {
  margin-left: auto;
  color: #999;
}

.ribbon .help {
  width: 16px;
  height: 16px;
  margin: 0 3px 0 9px;
  padding: 0;
  border-radius: 50%;
  background: #0063c4;
  color: #fff;
  font-weight: bold;
  line-height: 16px;
}

.address-row {
  display: flex;
  align-items: center;
  height: 38px;
  padding: 0 12px 2px;
  border-bottom: 1px solid #b8b8b8;
}

.address-row > button {
  margin-right: 15px;
}

.address-row > .recent {
  margin-right: 9px;
  color: #6b6b6b;
}

.address-row > .up {
  margin-right: 6px;
}

.address {
  flex: 1;
  display: flex;
  align-items: center;
  height: 22px;
  padding-left: 3px;
  border: 1px solid #d9d9d9;
  white-space: nowrap;
}

.address button {
  padding: 0 4px;
}

.dots {
  width: 12px;
  margin-left: 4px;
  color: #555;
}

.crumb-hot {
  display: flex;
  align-items: center;
  height: 20px;
  margin-left: 2px;
  padding-right: 2px;
  border: 1px solid #cce8ff;
  background: #e5f3ff;
}

.crumb-hot button {
  height: 18px;
  padding: 0 3px;
  border-right: 1px solid #cce8ff;
}

.address .open {
  margin: 0 3px 0 auto;
  color: #6b6b6b;
}

.address .refresh {
  height: 20px;
  padding: 0 1px;
  border-left: 1px solid #d9d9d9;
}

.search {
  display: flex;
  align-items: center;
  width: 342px;
  height: 22px;
  margin-left: 12px;
  padding: 0 3px 0 6px;
  border: 1px solid #d9d9d9;
  color: #6d6d6d;
}

.search input {
  flex: 1;
  min-width: 0;
  padding: 0;
  border: none;
  background: none;
}

input::placeholder {
  color: #6d6d6d;
  opacity: 1;
}

.ex-body {
  flex: 1;
  min-height: 0;
  display: flex;
}

.tree {
  width: 336px;
  list-style: none;
  overflow: hidden;
}

.tree li {
  width: 335px;
  padding-left: 32px;
}

.tree a {
  display: flex;
  align-items: center;
  gap: 5px;
  height: 24px;
}

.tree .root {
  margin-top: 8px;
  padding-left: 24px;
}

.tree .selected {
  background: #d9d9d9;
}

.faded {
  opacity: 0.5;
}

.scrollbar {
  display: flex;
  flex-direction: column;
  align-items: center;
  width: 16px;
  padding: 4px 0 3px;
  background: #f0f0f0;
  color: #505050;
}

.track {
  flex: 1;
  width: 15px;
  margin: 3px 0 4px;
}

.thumb {
  height: 71%;
  margin-top: 137px;
  background: #cdcdcd;
}

.files {
  flex: 1;
  margin-left: 2px;
  border-left: 1px solid #f0f0f0;
}

.files table {
  width: 789px;
  table-layout: fixed;
  border-collapse: collapse;
}

.f-name { width: 444px; }
.f-date { width: 144px; }
.f-type { width: 120px; }
.f-size { width: 81px; }

.files th {
  position: relative;
  height: 26px;
  padding: 0 6px;
  border-right: 1px solid #e5e5e5;
  color: #4c607a;
  font-weight: normal;
  text-align: left;
}

.files thead::after {
  content: "";
  display: block;
  height: 5px;
}

.sorted svg {
  position: absolute;
  top: -3px;
  left: 67px;
}

.name-head {
  display: flex;
  align-items: center;
  gap: 9px;
  padding-left: 5px;
}

.name-head input {
  border-color: #333;
}

.files td {
  height: 21px;
  padding: 0 7px;
  color: #6d6d6d;
  white-space: nowrap;
}

.files td:first-child {
  padding-left: 34px;
  color: #000;
}

.files td:last-child {
  text-align: right;
}

.files td a {
  display: flex;
  align-items: center;
  gap: 4px;
}

.ex-status {
  display: flex;
  align-items: center;
  height: 24px;
  padding: 0 4px 0 14px;
  color: #1e395b;
}

.count {
  margin-right: auto;
  padding-right: 10px;
  border-right: 1px solid #eee;
}

.view {
  display: grid;
  place-items: center;
  width: 22px;
  height: 23px;
}

.view.on {
  border: 1px solid #26a0da;
  background: #cbe8f6;
}

/* taskbar */
.taskbar {
  display: flex;
  align-items: center;
  height: 40px;
  background: linear-gradient(90deg, #1b1d26 0, #1b1d26 48px, #3a3024 330px, #3a2a22 600px, #33302a 820px, #2e241e 1050px, #1f1f1f 1240px, #202124 1500px, #26282e 100%);
  color: #fff;
}

.start {
  display: grid;
  place-items: center;
  width: 48px;
  height: 40px;
}

.task-search {
  display: flex;
  align-items: center;
  gap: 9px;
  width: 288px;
  height: 40px;
  padding: 0 10px;
  border: 1px solid #c4c4c4;
  background: #f2f2f2;
}

.task-search input {
  flex: 1;
  min-width: 0;
  padding: 0;
  border: none;
  background: none;
  font-size: 15px;
}

.task-search input::placeholder {
  color: #3c3c3c;
}

.apps {
  display: flex;
  gap: 1px;
  padding-left: 3px;
}

.apps button {
  position: relative;
  display: grid;
  place-items: center;
  width: 48px;
  height: 40px;
}

.apps .open::after {
  content: "";
  position: absolute;
  left: 4px;
  right: 4px;
  bottom: 0;
  height: 2px;
  background: #76b9ed;
}

.apps .stacked::after {
  border-right: 8px solid #44749b;
}

.apps .active {
  background: #645a52;
}

.apps .active::after {
  left: 0;
  right: 0;
}

.tray {
  display: flex;
  gap: 16px;
  margin-left: auto;
}

.clock {
  display: flex;
  flex-direction: column;
  width: 80px;
  line-height: 18px;
  text-align: center;
}

.notices {
  position: relative;
  width: 41px;
  height: 40px;
  padding-left: 4px;
  border-right: 1px solid #666;
  margin-right: 4px;
}

.badge {
  position: absolute;
  left: 9px;
  top: 19px;
  min-width: 20px;
  height: 18px;
  border: 1px solid #aaa;
  border-radius: 9px;
  background: #2b2d33;
  font-weight: bold;
}
```
